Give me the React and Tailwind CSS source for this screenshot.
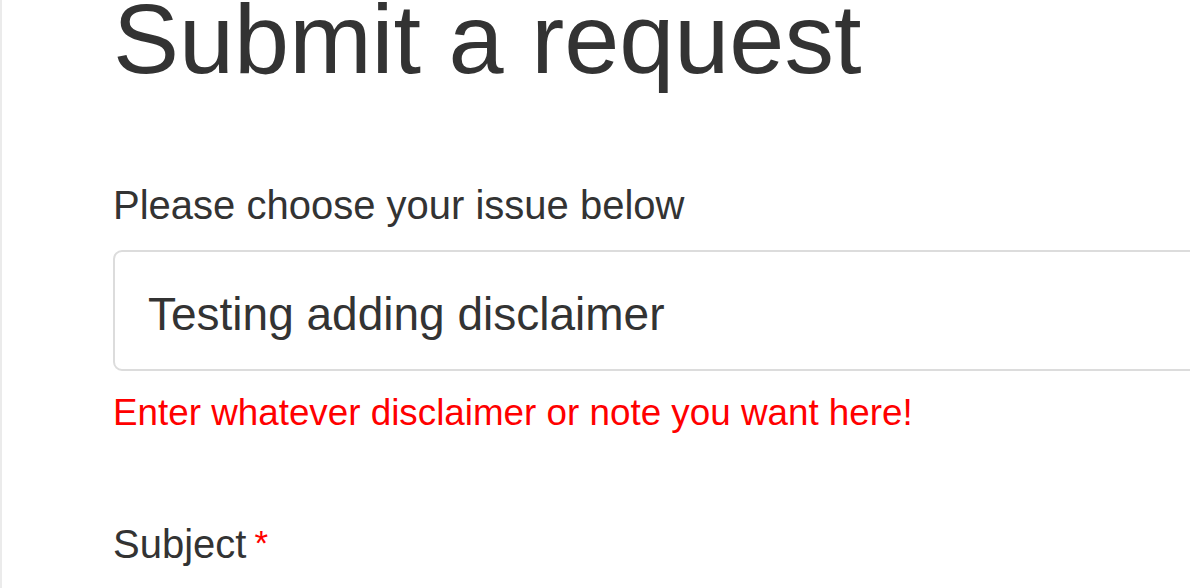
export default function App() {
  return (
    <div
      className="h-[588px] w-[1190px] overflow-hidden bg-white border-l-2 border-[#ebebeb]"
      style={{ fontFamily: '"Liberation Sans", Arial, Helvetica, sans-serif' }}
    >
      <div className="pl-[111px]">
        <h1 className="text-[99px] leading-[78px] text-[#333333] font-normal m-0">Submit a request</h1>
        <div className="mt-[103px] text-[40px] leading-[48px] text-[#333333]">Please choose your issue below</div>
        <div className="mt-[21px] w-[1200px] h-[121px] border-2 border-[#dcdcdc] rounded-[9px] pt-[30px] pl-[33px] text-[46px] leading-[64px] text-[#333333]">
          Testing adding disclaimer
        </div>
        <div className="mt-[20px] text-[36.8px] leading-[44px] text-[#ff0000]">Enter whatever disclaimer or note you want here!</div>
        <div className="mt-[85px] text-[40px] leading-[48px] text-[#333333]">
          Subject<span className="relative top-[-3px] ml-[8px] text-[35px] text-[#ff0000]">*</span>
        </div>
      </div>
    </div>
  );
}
